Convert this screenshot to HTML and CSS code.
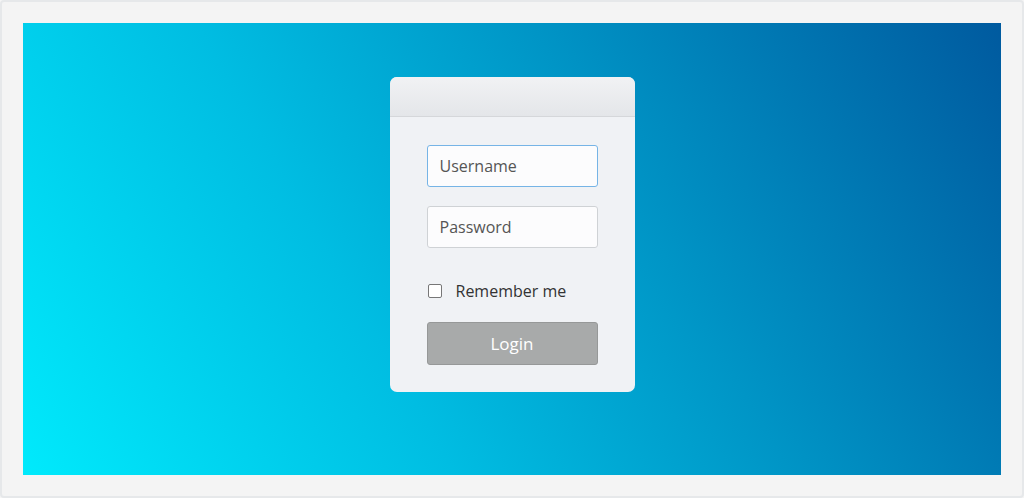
FILE: index.html
```html
<!DOCTYPE html>
<html>
<head>
<meta charset="utf-8">
<link rel="stylesheet" href="styles.css">
</head>
<body>
<div class="frame">
  <div class="stage">
    <div class="card">
      <div class="card-head"></div>
      <form class="card-body">
        <input class="field focused" type="text" placeholder="Username">
        <input class="field" type="password" placeholder="Password">
        <label class="remember"><span class="box"></span><span>Remember me</span></label>
        <button class="login" type="button">Login</button>
      </form>
    </div>
  </div>
</div>
</body>
</html>
```
FILE: styles.css
```css
html, body { margin: 0; padding: 0; }
body { width: 1024px; height: 498px; overflow: hidden; background: #f5f5f5; font-family: "Source Sans Pro", "Open Sans", "Liberation Sans", sans-serif; }
.frame {
  box-sizing: border-box;
  width: 1024px; height: 498px;
  border: 2px solid #e6e8ea;
  border-radius: 4px;
  background: #f4f4f4;
  padding: 21px;
}
.stage {
  width: 978px; height: 452px;
  background: linear-gradient(60deg, #00eafc 0%, #00bde2 35%, #0095c6 62%, #005a9f 100%);
  display: flex;
  justify-content: center;
  align-items: flex-start;
}
.card {
  margin-top: 54px;
  width: 245px; height: 315px;
  background: #f0f2f5;
  border-radius: 7px;
  overflow: hidden;
  display: flex; flex-direction: column;
}
.card-head {
  height: 39px;
  background: linear-gradient(#f1f2f4, #e4e6e9);
  border-bottom: 1px solid #d5d7da;
}
.card-body {
  margin: 0;
  padding: 28px 37px 0 37px;
  display: flex; flex-direction: column;
}
.field {
  box-sizing: border-box;
  width: 171px; height: 42px;
  border: 1px solid #cfd2d5;
  border-radius: 3px;
  background: #fcfcfd;
  padding: 0 12px;
  font-family: inherit;
  font-size: 16px;
  color: #444;
  outline: none;
  margin: 0 0 19px 0;
}
.field::placeholder { color: #555; }
.field.focused { border-color: #76b4e6; }
.remember {
  display: flex; align-items: center;
  margin-top: 16px;
  font-size: 16px;
  color: #333;
  height: 16px;
}
.box {
  box-sizing: border-box;
  width: 14px; height: 14px;
  border: 1px solid #777;
  border-radius: 2px;
  background: #fff;
  margin-left: 1px;
  margin-right: 14px;
}
.login {
  box-sizing: border-box;
  margin-top: 23px;
  width: 171px; height: 43px;
  background: #a8aaaa;
  border: 1px solid #969898;
  border-radius: 3px;
  color: #fff;
  font-family: inherit;
  font-size: 17px;
  padding: 0;
}
```
